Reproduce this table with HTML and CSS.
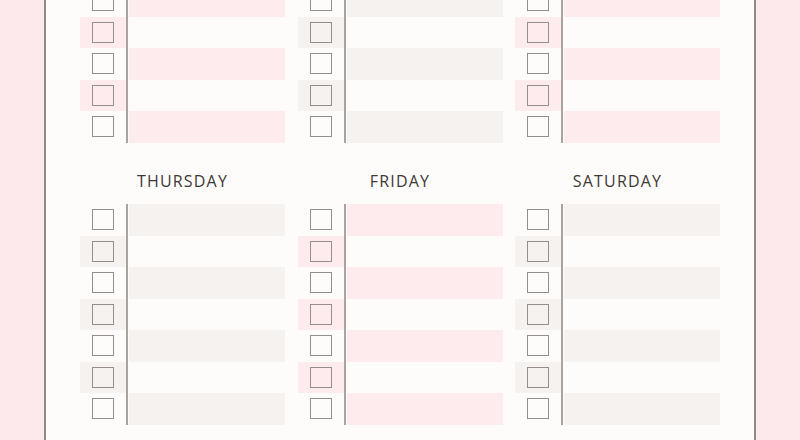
FILE: index.html
```html
<!DOCTYPE html>
<html lang="en">
<head>
<meta charset="utf-8">
<title>Weekly To-Do</title>
<link rel="stylesheet" href="styles.css">
</head>
<body>
<div class="page">
  <div class="week">
    <section class="day pink">
      <ul class="rows">
        <li class="row"><span class="check"><span class="box"></span></span><span class="line"></span></li>
        <li class="row"><span class="check"><span class="box"></span></span><span class="line"></span></li>
        <li class="row"><span class="check"><span class="box"></span></span><span class="line"></span></li>
        <li class="row"><span class="check"><span class="box"></span></span><span class="line"></span></li>
        <li class="row"><span class="check"><span class="box"></span></span><span class="line"></span></li>
        <li class="row"><span class="check"><span class="box"></span></span><span class="line"></span></li>
        <li class="row"><span class="check"><span class="box"></span></span><span class="line"></span></li>
      </ul>
    </section>
    <section class="day beige">
      <ul class="rows">
        <li class="row"><span class="check"><span class="box"></span></span><span class="line"></span></li>
        <li class="row"><span class="check"><span class="box"></span></span><span class="line"></span></li>
        <li class="row"><span class="check"><span class="box"></span></span><span class="line"></span></li>
        <li class="row"><span class="check"><span class="box"></span></span><span class="line"></span></li>
        <li class="row"><span class="check"><span class="box"></span></span><span class="line"></span></li>
        <li class="row"><span class="check"><span class="box"></span></span><span class="line"></span></li>
        <li class="row"><span class="check"><span class="box"></span></span><span class="line"></span></li>
      </ul>
    </section>
    <section class="day pink">
      <ul class="rows">
        <li class="row"><span class="check"><span class="box"></span></span><span class="line"></span></li>
        <li class="row"><span class="check"><span class="box"></span></span><span class="line"></span></li>
        <li class="row"><span class="check"><span class="box"></span></span><span class="line"></span></li>
        <li class="row"><span class="check"><span class="box"></span></span><span class="line"></span></li>
        <li class="row"><span class="check"><span class="box"></span></span><span class="line"></span></li>
        <li class="row"><span class="check"><span class="box"></span></span><span class="line"></span></li>
        <li class="row"><span class="check"><span class="box"></span></span><span class="line"></span></li>
      </ul>
    </section>
    <section class="day beige">
      <h2 class="day-name">THURSDAY</h2>
      <ul class="rows">
        <li class="row"><span class="check"><span class="box"></span></span><span class="line"></span></li>
        <li class="row"><span class="check"><span class="box"></span></span><span class="line"></span></li>
        <li class="row"><span class="check"><span class="box"></span></span><span class="line"></span></li>
        <li class="row"><span class="check"><span class="box"></span></span><span class="line"></span></li>
        <li class="row"><span class="check"><span class="box"></span></span><span class="line"></span></li>
        <li class="row"><span class="check"><span class="box"></span></span><span class="line"></span></li>
        <li class="row"><span class="check"><span class="box"></span></span><span class="line"></span></li>
      </ul>
    </section>
    <section class="day pink">
      <h2 class="day-name">FRIDAY</h2>
      <ul class="rows">
        <li class="row"><span class="check"><span class="box"></span></span><span class="line"></span></li>
        <li class="row"><span class="check"><span class="box"></span></span><span class="line"></span></li>
        <li class="row"><span class="check"><span class="box"></span></span><span class="line"></span></li>
        <li class="row"><span class="check"><span class="box"></span></span><span class="line"></span></li>
        <li class="row"><span class="check"><span class="box"></span></span><span class="line"></span></li>
        <li class="row"><span class="check"><span class="box"></span></span><span class="line"></span></li>
        <li class="row"><span class="check"><span class="box"></span></span><span class="line"></span></li>
      </ul>
    </section>
    <section class="day beige">
      <h2 class="day-name">SATURDAY</h2>
      <ul class="rows">
        <li class="row"><span class="check"><span class="box"></span></span><span class="line"></span></li>
        <li class="row"><span class="check"><span class="box"></span></span><span class="line"></span></li>
        <li class="row"><span class="check"><span class="box"></span></span><span class="line"></span></li>
        <li class="row"><span class="check"><span class="box"></span></span><span class="line"></span></li>
        <li class="row"><span class="check"><span class="box"></span></span><span class="line"></span></li>
        <li class="row"><span class="check"><span class="box"></span></span><span class="line"></span></li>
        <li class="row"><span class="check"><span class="box"></span></span><span class="line"></span></li>
      </ul>
    </section>
  </div>
</div>
</body>
</html>
```

FILE: styles.css
```css
html, body {
  margin: 0;
  padding: 0;
}

body {
  background: #fde9ec;
  height: 440px;
  overflow: hidden;
  font-family: "Open Sans", "Liberation Sans", sans-serif;
}

.page {
  margin: -78px 44px 0 44px;
  background: #fefcfa;
  border-left: 2px solid #8e8987;
  border-right: 2px solid #8e8987;
  padding: 0 34px 40px 34px;
}

.week {
  display: grid;
  grid-template-columns: repeat(3, 1fr);
  column-gap: 12.5px;
  row-gap: 28.5px;
}

.day-name {
  margin: 0 0 13px 0;
  height: 20px;
  line-height: 20px;
  text-align: center;
  font-size: 16px;
  font-weight: 400;
  letter-spacing: 1.2px;
  color: #3d3837;
}

.rows {
  list-style: none;
  margin: 0;
  padding: 0;
}

.row {
  display: grid;
  grid-template-columns: 46px 1fr;
  height: 31.5px;
}

.check {
  display: flex;
  align-items: center;
  padding-left: 12px;
}

.box {
  width: 22px;
  height: 21px;
  box-sizing: border-box;
  border: 1.5px solid #948e8c;
}

.line {
  border-left: 2px solid #aaa4a1;
  background-clip: padding-box;
  padding-left: 1px;
}

.row:nth-child(odd) .line {
  box-shadow: inset 1px 0 0 #fefcfa;
}

.pink .row:nth-child(odd) .line { background: #fdebee padding-box; }
.pink .row:nth-child(even) .check { background: #fdebee; }
.beige .row:nth-child(odd) .line { background: #f6f2ef padding-box; }
.beige .row:nth-child(even) .check { background: #f6f2ef; }
```
